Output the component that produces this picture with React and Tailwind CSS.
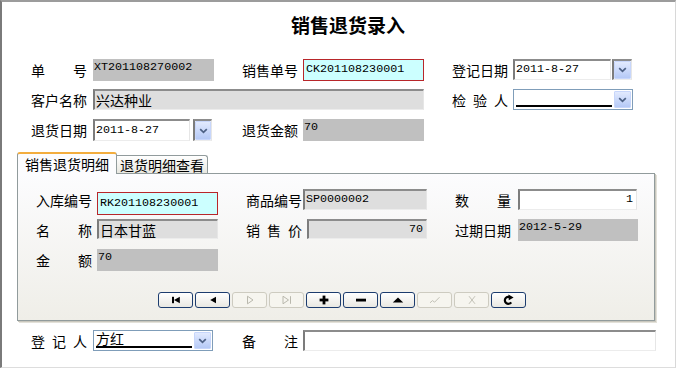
import React from "react";

function Label({ text, className = "" }) {
  return (
    <div
      className={`flex justify-between items-center w-[56px] h-[21px] shrink-0 text-[14px] leading-none text-black ${className}`}
    >
      {text.split("").map((c, i) => (
        <span key={i}>{c}</span>
      ))}
    </div>
  );
}

const mono = "font-['Liberation_Mono',monospace] text-[11.7px]";

function RoDark({ children, className = "" }) {
  return (
    <div className={`bg-[#c0c0c0] shrink-0 pt-[1px] pl-[1px] leading-[14px] ${mono} ${className}`}>
      {children}
    </div>
  );
}

function Cyan({ children, className = "" }) {
  return (
    <div
      className={`bg-[#ccffff] border border-[#b8262a] shrink-0 flex items-center pl-[2px] ${mono} ${className}`}
    >
      {children}
    </div>
  );
}

function Sunken({ children, className = "", bg = "bg-white", right = false, cjk = false }) {
  return (
    <div
      className={`${bg} shrink-0 flex items-center border-t-2 border-l-2 border-r border-b border-t-[#8c8c8c] border-l-[#7c7c7c] border-r-[#e6e6e6] border-b-[#ececec] ${
        right ? "justify-end pr-[3px]" : "pl-[1px]"
      } ${cjk ? "text-[14px] leading-none" : mono} ${className}`}
    >
      {children}
    </div>
  );
}

function Chevron() {
  return (
    <svg width="9" height="6" viewBox="0 0 9 6">
      <path d="M1.2 1.2 L4.5 4.4 L7.8 1.2" fill="none" stroke="#4d6185" strokeWidth="1.7" />
    </svg>
  );
}

function DropBtn({ className = "" }) {
  return (
    <div
      className={`flex items-center justify-center bg-linear-to-b from-[#e2eafe] to-[#b5c9f6] border border-[#c7d6fb] rounded-[1px] ${className}`}
    >
      <Chevron />
    </div>
  );
}

function SunkenDrop({ className = "" }) {
  return (
    <div
      className={`shrink-0 flex border-t-2 border-l-2 border-r border-b border-t-[#8c8c8c] border-l-[#7c7c7c] border-r-[#e6e6e6] border-b-[#ececec] bg-white ${className}`}
    >
      <DropBtn className="flex-1" />
    </div>
  );
}

function Combo({ text = "", className = "" }) {
  return (
    <div className={`shrink-0 flex border border-[#7f9db9] bg-white p-[1px] ${className}`}>
      <div className="flex-1 flex items-end pl-[1px] pr-[2px] pb-[1px]">
        <div className="w-full h-full border-b-2 border-black text-[14px] leading-[16px] flex items-end">
          {text}
        </div>
      </div>
      <DropBtn className="w-[17px]" />
    </div>
  );
}

const I = {
  first: (
    <svg width="14" height="10" viewBox="0 0 14 10">
      <rect x="3" y="1.8" width="2" height="6.4" fill="#000" />
      <polygon points="10.8,1.8 10.8,8.2 5,5" fill="#000" />
    </svg>
  ),
  prior: (
    <svg width="14" height="10" viewBox="0 0 14 10">
      <polygon points="10,1.8 10,8.2 4.2,5" fill="#000" />
    </svg>
  ),
  next: (
    <svg width="14" height="10" viewBox="0 0 14 10">
      <polygon points="4.5,1.2 4.5,8.8 10,5" fill="none" stroke="#b9b8ad" strokeWidth="1" />
    </svg>
  ),
  last: (
    <svg width="14" height="10" viewBox="0 0 14 10">
      <polygon points="3,1.2 3,8.8 8.5,5" fill="none" stroke="#b9b8ad" strokeWidth="1" />
      <line x1="10.5" y1="1.2" x2="10.5" y2="8.8" stroke="#b9b8ad" strokeWidth="1" />
    </svg>
  ),
  plus: (
    <svg width="14" height="10" viewBox="0 0 14 10">
      <rect x="5.6" y="0.6" width="2.8" height="8.8" fill="#000" />
      <rect x="2.6" y="3.6" width="8.8" height="2.8" fill="#000" />
    </svg>
  ),
  minus: (
    <svg width="14" height="10" viewBox="0 0 14 10">
      <rect x="2" y="3.7" width="10" height="2.8" fill="#000" />
    </svg>
  ),
  up: (
    <svg width="14" height="10" viewBox="0 0 14 10">
      <polygon points="1.8,7.6 12.2,7.6 7,2.6" fill="#000" />
    </svg>
  ),
  post: (
    <svg width="14" height="10" viewBox="0 0 14 10">
      <polyline points="2,7.8 4.5,5.6 6.6,7.2 11.5,2.2" fill="none" stroke="#c2c1b6" strokeWidth="1" />
    </svg>
  ),
  cancel: (
    <svg width="14" height="10" viewBox="0 0 14 10">
      <path d="M4 1.2 L10 8.8 M10 1.2 L4 8.8" fill="none" stroke="#c2c1b6" strokeWidth="1" />
    </svg>
  ),
  refresh: (
    <svg width="14" height="12" viewBox="0 0 14 12">
      <path d="M8.6 3.6 A3.5 3.5 0 1 0 9.2 8.4" fill="none" stroke="#000" strokeWidth="2.2" />
      <polygon points="6.4,0.6 11.6,3.6 6.8,6.2" fill="#000" />
    </svg>
  ),
};

function NavBtn({ icon, enabled }) {
  return (
    <div
      className={`w-[35px] h-[16px] shrink-0 rounded-[3px] border flex items-center justify-center ${
        enabled
          ? "border-[#1c3c6e] bg-linear-to-b from-white to-[#e9e8e2]"
          : "border-[#cdcbc0] bg-[#f6f5ef]"
      }`}
    >
      {icon}
    </div>
  );
}

export default function App() {
  return (
    <div className="w-[680px] h-[370px] bg-white font-['Noto_Sans_CJK_SC',sans-serif] text-black overflow-hidden">
      <div className="w-[676px] h-[368px] flex flex-col border-l-2 border-t-2 border-r border-b border-l-[#7a7a7a] border-t-[#9c9c9c] border-r-[#d8d8d8] border-b-[#dddddd] bg-white">
        {/* title */}
        <div className="h-[57px] shrink-0 pl-[289px] pt-[11px] text-[19px] font-bold leading-[24px]">
          销售退货录入
        </div>

        {/* row 1 */}
        <div className="flex items-start pl-[29px] h-[22px] shrink-0">
          <Label text="单号" />
          <RoDark className="ml-[6px] w-[121px] h-[22px]">XT201108270002</RoDark>
          <Label text="销售单号" className="ml-[28px]" />
          <Cyan className="ml-[5px] w-[121px] h-[22px]">CK201108230001</Cyan>
          <Label text="登记日期" className="ml-[28px]" />
          <Sunken className="ml-[5px] w-[98px] h-[21px]">2011-8-27</Sunken>
          <SunkenDrop className="ml-[1px] w-[20px] h-[21px]" />
        </div>

        {/* row 2 */}
        <div className="flex items-start pl-[29px] h-[21px] mt-[8px] shrink-0">
          <Label text="客户名称" />
          <Sunken bg="bg-[#dedede]" cjk className="ml-[6px] w-[331px] h-[21px]">
            兴达种业
          </Sunken>
          <Label text="检验人" className="ml-[28px]" />
          <Combo className="ml-[5px] w-[120px] h-[21px]" />
        </div>

        {/* row 3 */}
        <div className="flex items-start pl-[29px] h-[22px] mt-[9px] shrink-0">
          <Label text="退货日期" />
          <Sunken className="ml-[6px] w-[97px] h-[22px]">2011-8-27</Sunken>
          <SunkenDrop className="ml-[3px] w-[19px] h-[22px]" />
          <Label text="退货金额" className="ml-[30px]" />
          <RoDark className="ml-[5px] w-[121px] h-[22px]">70</RoDark>
        </div>

        {/* tabs */}
        <div className="flex items-end pl-[15px] h-[21px] mt-[11px] shrink-0">
          <div className="relative z-10 -mb-px w-[100px] h-[22px] bg-[#fcfcfe] border border-[#919b9c] border-b-0 border-t-2 border-t-[#f3ad3e] rounded-t-[3px] flex items-center justify-center text-[14px] leading-none">
            销售退货明细
          </div>
          <div className="w-[91px] h-[18px] bg-linear-to-b from-white to-[#e8e7e0] border border-[#919b9c] border-l-0 border-b-0 rounded-tr-[3px] flex items-center justify-center text-[14px] leading-none">
            退货明细查看
          </div>
        </div>

        {/* panel */}
        <div className="ml-[15px] w-[638px] h-[148px] shrink-0 border border-[#919b9c] bg-linear-to-b from-[#fcfcfe] to-[#efeee8] shadow-[1px_1px_0_#c9c7bd,2px_2px_0_#e3e1d9] pt-[15px] pl-[18px] flex flex-col">
          {/* row A */}
          <div className="flex items-start h-[26px] shrink-0">
            <Label text="入库编号" />
            <Cyan className="ml-[5px] mt-[3px] w-[121px] h-[23px]">RK201108230001</Cyan>
            <Label text="商品编号" className="ml-[28px]" />
            <Sunken bg="bg-[#dedede]" className="ml-[1px] w-[124px] h-[21px]">
              SP0000002
            </Sunken>
            <Label text="数量" className="ml-[28px]" />
            <Sunken right className="ml-[7px] w-[119px] h-[21px]">
              1
            </Sunken>
          </div>

          {/* row B */}
          <div className="flex items-start h-[22px] mt-[4px] shrink-0">
            <Label text="名称" />
            <Sunken bg="bg-[#dedede]" cjk className="ml-[5px] w-[121px] h-[20px]">
              日本甘蓝
            </Sunken>
            <Label text="销售价" className="ml-[28px]" />
            <Sunken bg="bg-[#dedede]" right className="ml-[5px] w-[120px] h-[20px]">
              70
            </Sunken>
            <Label text="过期日期" className="ml-[28px]" />
            <RoDark className="ml-[7px] w-[120px] h-[22px]">2012-5-29</RoDark>
          </div>

          {/* row C */}
          <div className="flex items-start h-[22px] mt-[8px] shrink-0">
            <Label text="金额" className="h-[22px]" />
            <RoDark className="ml-[5px] w-[121px] h-[22px]">70</RoDark>
          </div>

          {/* navigator */}
          <div className="flex gap-[2px] ml-[122px] mt-[21px] shrink-0">
            <NavBtn icon={I.first} enabled />
            <NavBtn icon={I.prior} enabled />
            <NavBtn icon={I.next} />
            <NavBtn icon={I.last} />
            <NavBtn icon={I.plus} enabled />
            <NavBtn icon={I.minus} enabled />
            <NavBtn icon={I.up} enabled />
            <NavBtn icon={I.post} />
            <NavBtn icon={I.cancel} />
            <NavBtn icon={I.refresh} enabled />
          </div>
        </div>

        {/* bottom row */}
        <div className="flex items-start pl-[29px] h-[21px] mt-[9px] shrink-0">
          <Label text="登记人" />
          <Combo text="方红" className="ml-[6px] w-[120px] h-[21px]" />
          <Label text="备注" className="ml-[29px]" />
          <Sunken className="ml-[5px] w-[353px] h-[21px]" />
        </div>
      </div>
    </div>
  );
}
